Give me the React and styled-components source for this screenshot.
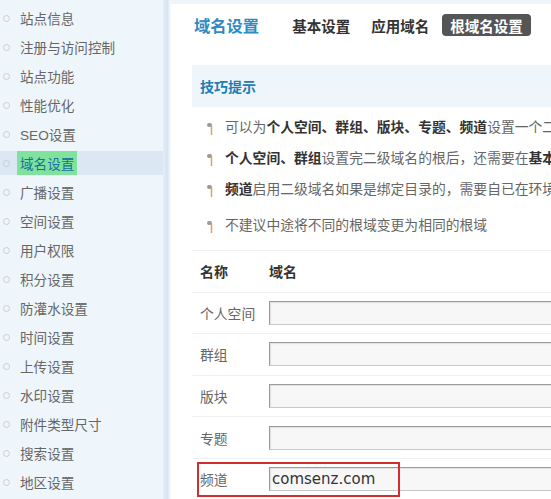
import React from "react";
import styled, { createGlobalStyle } from "styled-components";

const GlobalStyle = createGlobalStyle`
  html, body {
    margin: 0;
    padding: 0;
    background: #fff;
    overflow: hidden;
  }
  body {
    font-family: "Liberation Sans", "Noto Sans CJK SC", sans-serif;
    color: #666;
  }
`;

const navItems = [
  "站点信息",
  "注册与访问控制",
  "站点功能",
  "性能优化",
  "SEO设置",
  "域名设置",
  "广播设置",
  "空间设置",
  "用户权限",
  "积分设置",
  "防灌水设置",
  "时间设置",
  "上传设置",
  "水印设置",
  "附件类型尺寸",
  "搜索设置",
  "地区设置",
];

const domainRows = [
  { name: "个人空间", value: "" },
  { name: "群组", value: "" },
  { name: "版块", value: "" },
  { name: "专题", value: "" },
  { name: "频道", value: "comsenz.com", marked: true },
];

const Page = styled.div`
  display: flex;
  width: 551px;
  height: 499px;
  overflow: hidden;
`;

const Sidebar = styled.nav`
  flex: 0 0 163px;
  display: flex;
  flex-direction: column;
  gap: 5px;
  padding-top: 6px;
  background: #eff6fb;
  box-sizing: border-box;
`;

const Splitter = styled.div`
  flex: 0 0 8px;
  background: linear-gradient(to right, #e3eef8 0%, #d6e5f2 55%, #eef4fa 85%, #fff 100%);
`;

const NavItem = styled.div`
  display: flex;
  align-items: center;
  height: 24px;
  padding-left: 3px;
  font-size: 13.6px;
  background: ${(p) => (p.$active ? "#dbe8f4" : "transparent")};
  white-space: nowrap;
`;

const Bullet = styled.span`
  width: 5px;
  height: 5px;
  border: 1px solid #c9cdd0;
  border-radius: 50%;
  margin-right: 7px;
  flex: none;
`;

const NavLabel = styled.span`
  display: flex;
  align-items: center;
  height: 24px;
  padding: 0 3px;
  color: ${(p) => (p.$active ? "#17709c" : "#666")};
  background: ${(p) => (p.$active ? "#7fe39d" : "transparent")};
`;

const Main = styled.main`
  flex: 1;
  min-width: 0;
  border-top: 4px solid #eef5fb;
  padding-left: 21px;
  overflow: hidden;
`;

const Header = styled.div`
  display: flex;
  align-items: center;
  height: 42px;
  white-space: nowrap;
`;

const Title = styled.h2`
  margin: 0 25px 0 2px;
  font-size: 16.3px;
  font-weight: 700;
  color: #2f8bc2;
`;

const Tabs = styled.div`
  display: flex;
  align-items: center;
  gap: 5px;
`;

const Tab = styled.span`
  display: flex;
  align-items: center;
  height: 22px;
  padding: 0 8px;
  border-radius: 4px;
  font-size: 14.5px;
  font-weight: 700;
  color: ${(p) => (p.$active ? "#fff" : "#333")};
  background: ${(p) => (p.$active ? "#555" : "transparent")};
`;

const TipBox = styled.div`
  margin-top: 19px;
  height: 42px;
  display: flex;
  align-items: center;
  padding-left: 8px;
  background: #eef6fc;
  width: 500px;
`;

const TipTitle = styled.h3`
  margin: 0;
  font-size: 14px;
  font-weight: 700;
  color: #1f7db4;
`;

const TipList = styled.ul`
  list-style: none;
  margin: 0;
  padding: 3px 0 0 15px;
`;

const TipItem = styled.li`
  display: flex;
  align-items: center;
  height: 31px;
  margin-top: ${(p) => (p.$spaced ? "5px" : "0")};
  font-size: 13.8px;
  color: #666;
  white-space: nowrap;
`;

const Strong = styled.b`
  color: #333;
`;

const TipIcon = () => (
  <svg width="7" height="14" viewBox="0 0 7 14" style={{ marginRight: 11, marginTop: 6, flex: "none" }}>
    <rect x="0" y="1" width="5" height="4" rx="2" fill="#9a9a9a" />
    <line x1="4.5" y1="3" x2="4.5" y2="13" stroke="#e5a04f" strokeWidth="1.5" />
  </svg>
);

const Table = styled.div`
  margin-top: 11px;
  width: 420px;
`;

const Row = styled.div`
  position: relative;
  display: grid;
  grid-template-columns: 69px 1fr;
  align-items: center;
  height: 41.6px;
  box-sizing: border-box;
  padding-left: 8px;
  border-top: 1px solid #eef0f2;
  white-space: nowrap;
`;

const HeadCell = styled.span`
  font-size: 14px;
  font-weight: 700;
  color: #333;
`;

const Label = styled.span`
  font-size: 13.8px;
  color: #666;
`;

const DomainInput = styled.input`
  width: 320px;
  height: 24px;
  box-sizing: border-box;
  padding: 0 2px;
  border: 1px solid #c8c8c8;
  border-top-color: #9a9a9a;
  border-left-color: #9a9a9a;
  background: #f7f7f7;
  box-shadow: inset 1px 1px 1px #e2e2e2;
  font-family: "DejaVu Sans", sans-serif;
  font-size: 15px;
  color: #333;
  outline: none;
`;

const Marker = styled.span`
  position: absolute;
  left: 5px;
  top: 3px;
  width: 203px;
  height: 35px;
  box-sizing: border-box;
  border: 2px solid #d12f2f;
  pointer-events: none;
`;

export default function App() {
  return (
    <>
      <GlobalStyle />
      <Page>
        <Sidebar>
          {navItems.map((item) => {
            const active = item === "域名设置";
            return (
              <NavItem key={item} $active={active}>
                <Bullet />
                <NavLabel $active={active}>{item}</NavLabel>
              </NavItem>
            );
          })}
        </Sidebar>
        <Splitter />
        <Main>
          <Header>
            <Title>域名设置</Title>
            <Tabs>
              <Tab>基本设置</Tab>
              <Tab>应用域名</Tab>
              <Tab $active>根域名设置</Tab>
            </Tabs>
          </Header>

          <TipBox>
            <TipTitle>技巧提示</TipTitle>
          </TipBox>
          <TipList>
            <TipItem>
              <TipIcon />
              <span>
                可以为<Strong>个人空间、群组、版块、专题、频道</Strong>设置一个二级域名的根，如：comsenz.com
              </span>
            </TipItem>
            <TipItem>
              <TipIcon />
              <span>
                <Strong>个人空间、群组</Strong>设置完二级域名的根后，还需要在<Strong>基本设置</Strong>中开启
              </span>
            </TipItem>
            <TipItem>
              <TipIcon />
              <span>
                <Strong>频道</Strong>启用二级域名如果是绑定目录的，需要自已在环境中配置
              </span>
            </TipItem>
            <TipItem $spaced>
              <TipIcon />
              <span>不建议中途将不同的根域变更为相同的根域</span>
            </TipItem>
          </TipList>

          <Table>
            <Row>
              <HeadCell>名称</HeadCell>
              <HeadCell>域名</HeadCell>
            </Row>
            {domainRows.map((row) => (
              <Row key={row.name}>
                <Label>{row.name}</Label>
                <DomainInput value={row.value} readOnly />
                {row.marked && <Marker />}
              </Row>
            ))}
          </Table>
        </Main>
      </Page>
    </>
  );
}
